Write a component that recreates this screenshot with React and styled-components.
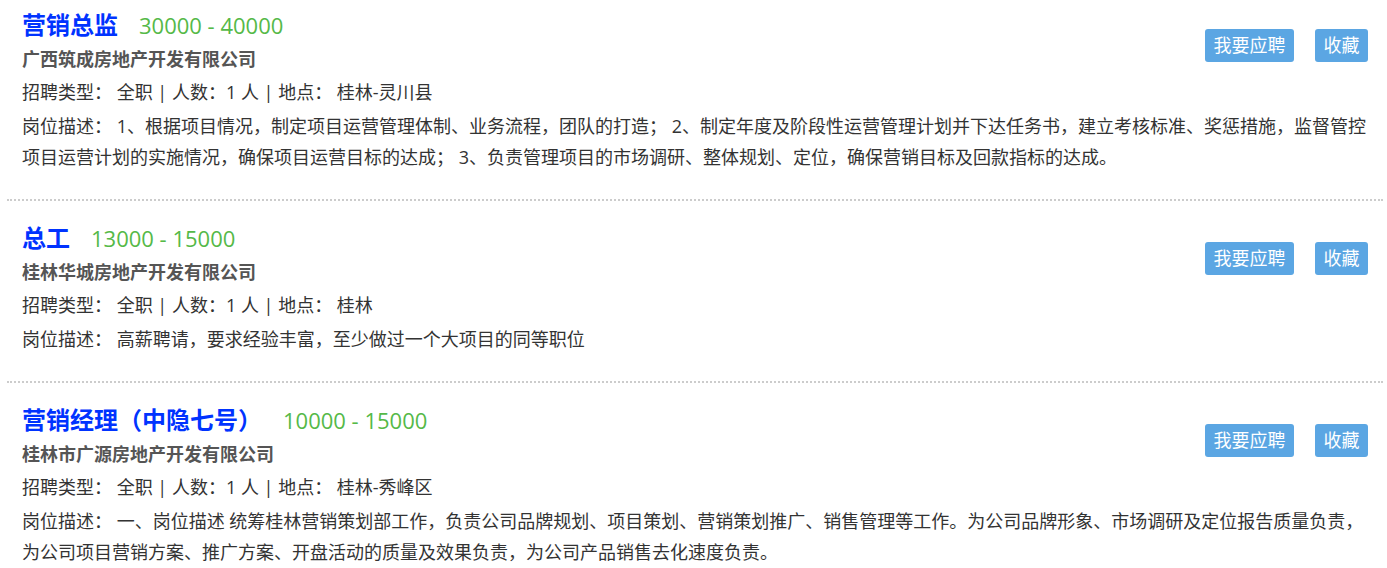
import React from 'react'
import styled, { createGlobalStyle } from 'styled-components';

const jobs = [
    {
        title: '营销总监',
        salary: '30000 - 40000',
        company: '广西筑成房地产开发有限公司',
        type: '全职',
        count: 1,
        place: '桂林-灵川县',
        desc: '1、根据项目情况，制定项目运营管理体制、业务流程，团队的打造； 2、制定年度及阶段性运营管理计划并下达任务书，建立考核标准、奖惩措施，监督管控项目运营计划的实施情况，确保项目运营目标的达成； 3、负责管理项目的市场调研、整体规划、定位，确保营销目标及回款指标的达成。',
    },
    {
        title: '总工',
        salary: '13000 - 15000',
        company: '桂林华城房地产开发有限公司',
        type: '全职',
        count: 1,
        place: '桂林',
        desc: '高薪聘请，要求经验丰富，至少做过一个大项目的同等职位',
    },
    {
        title: '营销经理（中隐七号）',
        salary: '10000 - 15000',
        company: '桂林市广源房地产开发有限公司',
        type: '全职',
        count: 1,
        place: '桂林-秀峰区',
        desc: '一、岗位描述 统筹桂林营销策划部工作，负责公司品牌规划、项目策划、营销策划推广、销售管理等工作。为公司品牌形象、市场调研及定位报告质量负责，为公司项目营销方案、推广方案、开盘活动的质量及效果负责，为公司产品销售去化速度负责。',
    },
];

const GlobalStyle = createGlobalStyle`
body {
    margin: 0;
    background: #fff;
    font-family: "Open Sans", "Noto Sans CJK SC", sans-serif;
}
`;

export default function App() {
    return (
        <>
            <GlobalStyle />
            <List>
                {jobs.map((job) => (
                    <Item key={job.title}>
                        <Head>
                            <div>
                                <TitleRow>
                                    <Title>{job.title}</Title>
                                    <Salary>{job.salary}</Salary>
                                </TitleRow>
                                <Company>{job.company}</Company>
                                <Info>
                                    招聘类型： {job.type} | 人数：{job.count} 人 | 地点： {job.place}
                                </Info>
                            </div>
                            <Actions>
                                <Button>我要应聘</Button>
                                <Button>收藏</Button>
                            </Actions>
                        </Head>
                        <Desc>岗位描述： {job.desc}</Desc>
                    </Item>
                ))}
            </List>
        </>
    )
}

const List = styled.div`
margin: 0 4px 0 7px;
`;
const Item = styled.div`
padding: 20px 15px 26px;
border-bottom: 2px dotted #ccc;

&:first-child {
    padding-top: 8px;
}
&:last-child {
    border-bottom: none;
}
`;
const Head = styled.div`
display: flex;
justify-content: space-between;
align-items: flex-start;
`;
const TitleRow = styled.div`
display: flex;
align-items: baseline;
gap: 21px;
height: 34px;
`;
const Title = styled.h2`
margin: 0;
font-size: 24px;
line-height: 34px;
font-weight: 700;
color: #0033ff;
`;
const Salary = styled.span`
font-size: 22px;
line-height: 34px;
color: #55b948;
`;
const Company = styled.div`
font-size: 18px;
line-height: 34px;
font-weight: 700;
color: #555;
`;
const Info = styled.div`
font-size: 18px;
line-height: 33px;
color: #333;
white-space: pre;
`;
const Actions = styled.div`
display: flex;
gap: 21px;
margin-top: 21px;
`;
const Button = styled.button`
height: 33px;
padding: 0 8.5px;
border: none;
border-radius: 3px;
background: #5ba6e3;
color: #fff;
font-family: inherit;
font-size: 18px;
line-height: 33px;
cursor: pointer;
`;
const Desc = styled.p`
margin: 2px -4px 0 0;
font-size: 18px;
line-height: 31px;
color: #333;
`;
